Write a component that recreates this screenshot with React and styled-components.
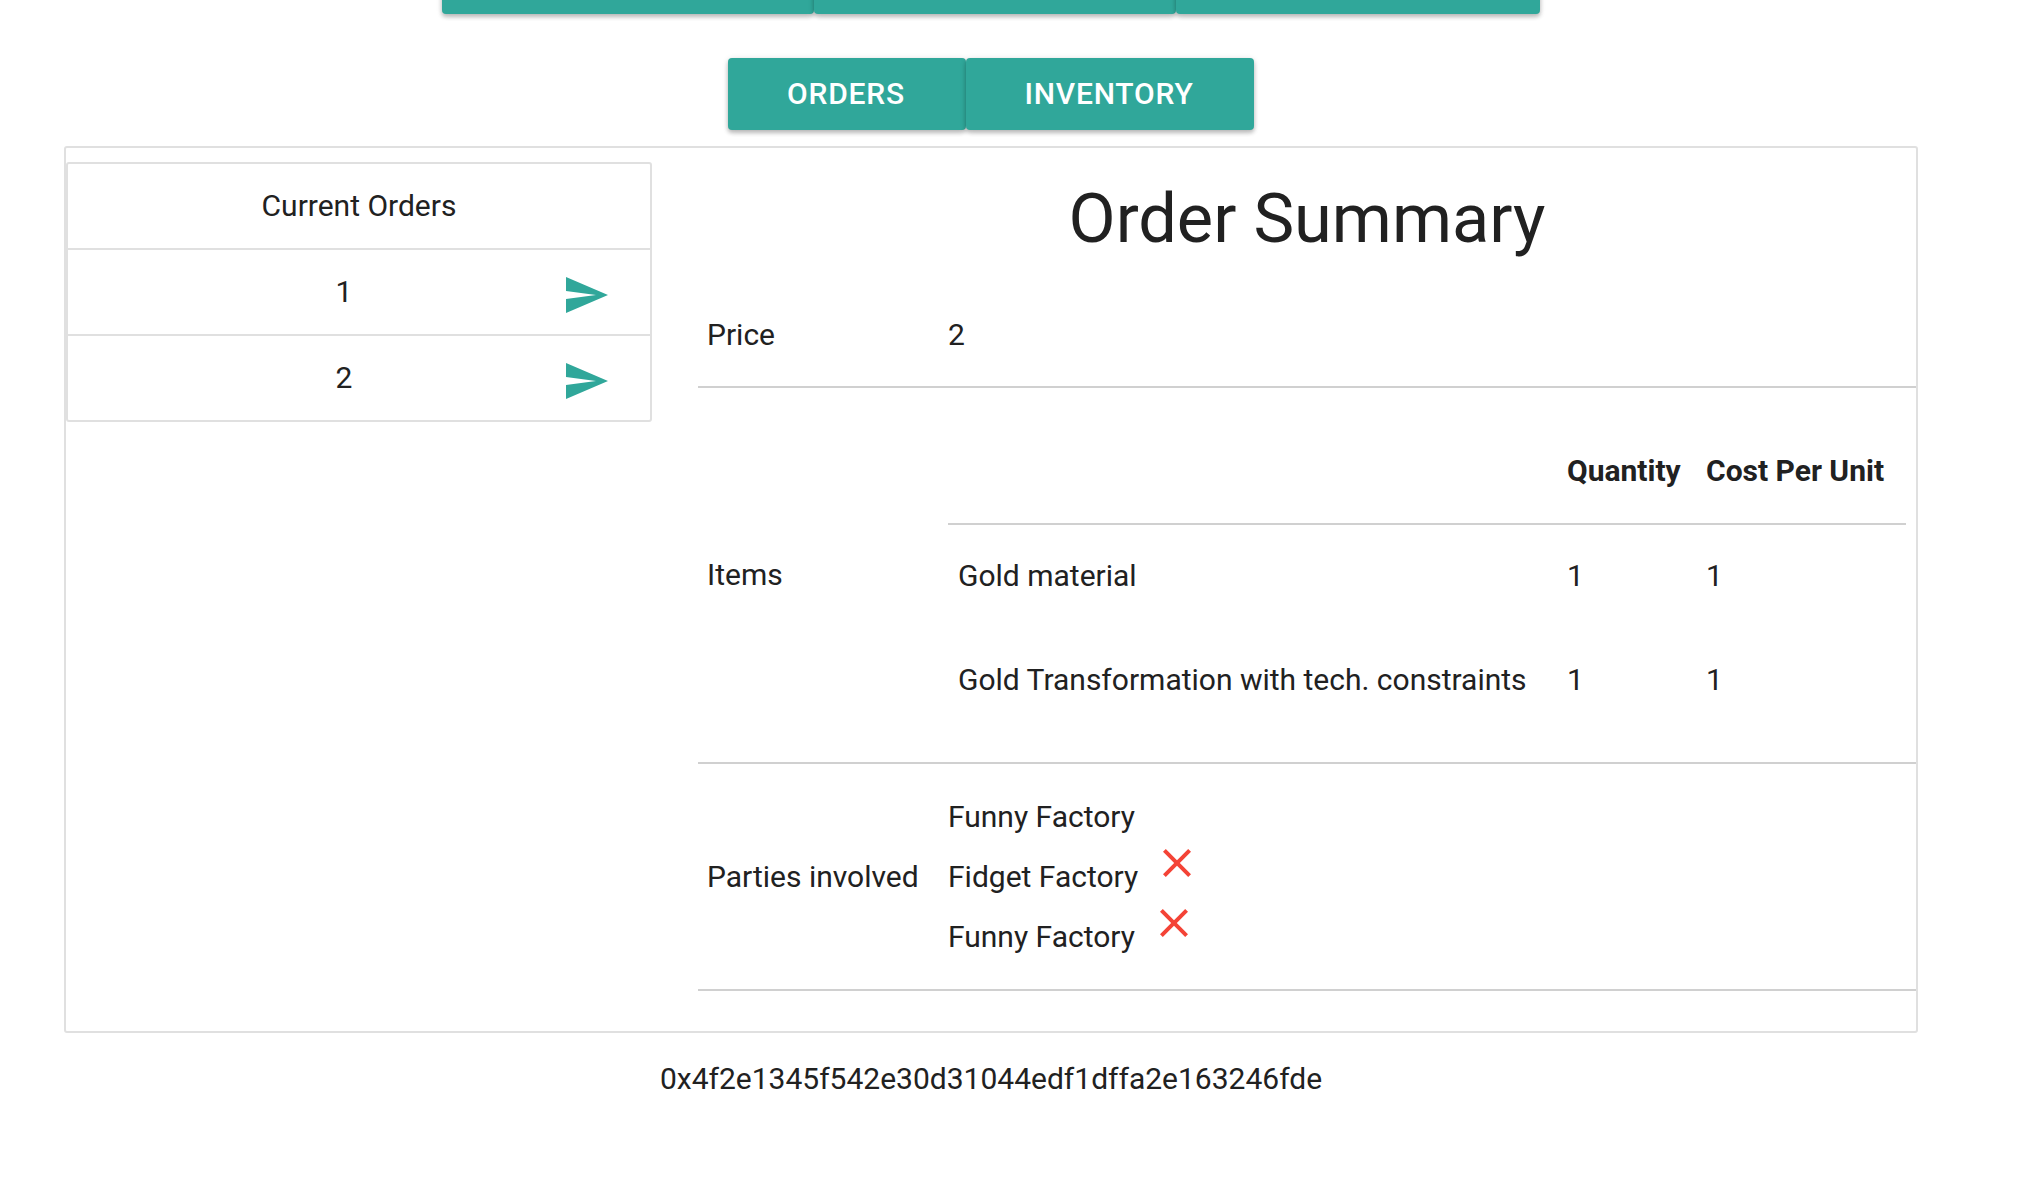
import React from 'react';
import styled, { createGlobalStyle } from 'styled-components';

const teal = '#30a79a';
const ink = '#212121';
const line = '#e0e0e0';

const GlobalStyle = createGlobalStyle`
  html, body {
    margin: 0;
    padding: 0;
    background: #fff;
    color: ${ink};
    font-family: Roboto, "Liberation Sans", sans-serif;
    font-size: 30px;
    overflow: hidden;
  }
`;

const Page = styled.div`
  width: 1854px;
  margin-left: 64px;
  height: 1184px;
  overflow: hidden;
`;

const ButtonRow = styled.div`
  display: flex;
  justify-content: center;
  margin-top: ${(p) => p.$top}px;
`;

const NavButton = styled.button`
  height: 72px;
  width: ${(p) => p.$width}px;
  padding: 0 2px 2px 0;
  border: 0;
  border-radius: 4px;
  background: ${teal};
  color: #fff;
  font-family: inherit;
  font-size: 30px;
  font-weight: 500;
  letter-spacing: 0.8px;
  box-shadow: 0 3px 4px rgba(0, 0, 0, 0.22), 0 1px 6px rgba(0, 0, 0, 0.12);
`;

const Panel = styled.div`
  display: flex;
  align-items: flex-start;
  box-sizing: border-box;
  height: 887px;
  margin-top: 16px;
  border: 2px solid ${line};
  border-radius: 3px;
`;

const OrderList = styled.div`
  box-sizing: border-box;
  flex: 0 0 586px;
  margin-top: 14px;
  border: 2px solid ${line};
  border-radius: 3px;
`;

const OrderHeader = styled.div`
  height: 84px;
  line-height: 84px;
  text-align: center;
`;

const OrderRow = styled.div`
  position: relative;
  height: 84px;
  line-height: 84px;
  border-top: 2px solid ${line};
  padding-right: 30px;
  text-align: center;
`;

const SendIcon = styled.svg`
  position: absolute;
  left: 494px;
  top: 21px;
  width: 48px;
  height: 48px;
  fill: ${teal};
`;

const Summary = styled.div`
  flex: 1;
  margin-left: 46px;
  min-width: 0;
`;

const Title = styled.h1`
  margin: 0;
  padding-top: 22px;
  height: 99px;
  line-height: 98px;
  font-size: 68.5px;
  font-weight: 400;
  text-align: center;
`;

const SummaryTable = styled.table`
  width: 100%;
  margin-top: 0;
  border-collapse: collapse;
  table-layout: fixed;
`;

const SummaryRow = styled.tr`
  border-bottom: 2px solid #d0d0d0;
  height: ${(p) => p.$height}px;
`;

const LabelCell = styled.td`
  width: 250px;
  box-sizing: border-box;
  padding: ${(p) => p.$top || 0}px 0 ${(p) => p.$bottom || 0}px 9px;
  vertical-align: middle;
`;

const ValueCell = styled.td`
  padding: ${(p) => p.$top || 0}px 0 0;
  vertical-align: middle;
`;

const ItemsTable = styled.table`
  width: 958px;
  border-collapse: collapse;
  table-layout: fixed;
`;

const ItemsHead = styled.tr`
  height: 106px;
  border-bottom: 2px solid #d0d0d0;
`;

const ItemsRow = styled.tr`
  height: 104px;
`;

const HeadCell = styled.th`
  width: ${(p) => p.$width}px;
  box-sizing: border-box;
  padding: 0 0 0 10px;
  text-align: left;
  font-weight: 700;
  white-space: nowrap;
`;

const ItemCell = styled.td`
  padding: 0 0 2px 10px;
  white-space: nowrap;
`;

const Party = styled.div`
  height: 60px;
  line-height: 60px;
  white-space: nowrap;
`;

const RemoveIcon = styled.svg`
  width: 48px;
  height: 48px;
  margin-top: -20px;
  margin-left: ${(p) => p.$gap}px;
  fill: #f44336;
`;

const Address = styled.div`
  margin-top: 28px;
  text-align: center;
  font-size: 30px;
`;

const Send = () => (
  <SendIcon viewBox="0 0 24 24">
    <path d="M2.01 21L23 12 2.01 3 2 10l15 2-15 2z" />
  </SendIcon>
);

const Remove = ({ gap }) => (
  <RemoveIcon $gap={gap} viewBox="0 0 24 24">
    <path d="M19 6.41L17.59 5 12 10.59 6.41 5 5 6.41 10.59 12 5 17.59 6.41 19 12 13.41 17.59 19 19 17.59 13.41 12z" />
  </RemoveIcon>
);

export default function App() {
  return (
    <>
      <GlobalStyle />
      <Page>
        <ButtonRow $top={-58}>
          <NavButton $width={372} />
          <NavButton $width={362} />
          <NavButton $width={364} />
        </ButtonRow>
        <ButtonRow $top={44}>
          <NavButton $width={238}>ORDERS</NavButton>
          <NavButton $width={288}>INVENTORY</NavButton>
        </ButtonRow>
        <Panel>
          <OrderList>
            <OrderHeader>Current Orders</OrderHeader>
            {[1, 2].map((id) => (
              <OrderRow key={id}>
                {id}
                <Send />
              </OrderRow>
            ))}
          </OrderList>
          <Summary>
            <Title>Order Summary</Title>
            <SummaryTable>
              <tbody>
                <SummaryRow $height={118}>
                  <LabelCell $top={13}>Price</LabelCell>
                  <ValueCell $top={13}>2</ValueCell>
                </SummaryRow>
                <SummaryRow $height={376}>
                  <LabelCell $bottom={2}>Items</LabelCell>
                  <ValueCell>
                    <ItemsTable>
                      <thead>
                        <ItemsHead>
                          <HeadCell $width={609} />
                          <HeadCell $width={139}>Quantity</HeadCell>
                          <HeadCell $width={210}>Cost Per Unit</HeadCell>
                        </ItemsHead>
                      </thead>
                      <tbody>
                        <ItemsRow>
                          <ItemCell>Gold material</ItemCell>
                          <ItemCell>1</ItemCell>
                          <ItemCell>1</ItemCell>
                        </ItemsRow>
                        <ItemsRow>
                          <ItemCell>Gold Transformation with tech. constraints</ItemCell>
                          <ItemCell>1</ItemCell>
                          <ItemCell>1</ItemCell>
                        </ItemsRow>
                      </tbody>
                    </ItemsTable>
                  </ValueCell>
                </SummaryRow>
                <SummaryRow $height={227}>
                  <LabelCell>Parties involved</LabelCell>
                  <ValueCell>
                    <Party>Funny Factory</Party>
                    <Party>Fidget Factory<Remove gap={15} /></Party>
                    <Party>Funny Factory<Remove gap={15} /></Party>
                  </ValueCell>
                </SummaryRow>
              </tbody>
            </SummaryTable>
          </Summary>
        </Panel>
        <Address>0x4f2e1345f542e30d31044edf1dffa2e163246fde</Address>
      </Page>
    </>
  );
}
